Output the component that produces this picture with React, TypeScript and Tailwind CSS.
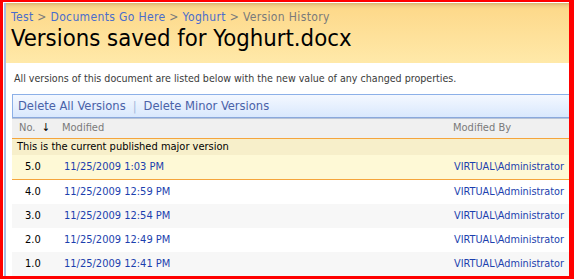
import React from "react";

const rows = [
  { v: "4.0", d: "11/25/2009 12:59 PM", bg: "bg-white" },
  { v: "3.0", d: "11/25/2009 12:54 PM", bg: "bg-[#f7f7f7]" },
  { v: "2.0", d: "11/25/2009 12:49 PM", bg: "bg-white" },
  { v: "1.0", d: "11/25/2009 12:41 PM", bg: "bg-[#f7f7f7]" },
];

const tahoma = "[font-family:'DejaVu_Sans_Condensed','DejaVu_Sans',sans-serif]";

export default function App() {
  return (
    <div className={`w-[574px] h-[279px] overflow-hidden bg-white border-[#ff0000] border-l-[3px] border-t-[2px] border-r-[5px] border-b-[3px] ${tahoma}`}>
      <div className="h-full pt-[1px] pl-[1px]">
        <div className="h-full border-l-2 border-[#a6bde3] flex flex-col">
          {/* header */}
          <div className="h-[60px] bg-[linear-gradient(to_bottom,#d9b570_0px,#f3cf85_3px,#fdd98b_6px,#ffe9a9_100%)] pl-[5px] pt-[7px]">
            <div className="text-[12px] leading-[14px] text-[#7a7a7a] tracking-[0.36px]">
              <span className="text-[#4a6dcc]">Test</span>
              <span> &gt; </span>
              <span className="text-[#4a6dcc]">Documents Go Here</span>
              <span> &gt; </span>
              <span className="text-[#4a6dcc]">Yoghurt</span>
              <span> &gt; </span>
              <span>Version History</span>
            </div>
            <div className="text-[23.7px] leading-[28px] text-black">Versions saved for Yoghurt.docx</div>
          </div>
          {/* description */}
          <div className="h-[31px] flex items-center pl-[8px] text-[10.6px] text-[#3a3a3a]">
            All versions of this document are listed below with the new value of any changed properties.
          </div>
          <div className="ml-[6px] flex flex-col">
            {/* toolbar */}
            <div className="h-[24px] border border-r-0 border-[#8cb0e8] border-b-[#8aa8dc] bg-[linear-gradient(to_bottom,#f4f8ff,#d9e8fd)] flex items-center pl-[5px] text-[12.8px] text-[#4a62a8] shadow-[0_1px_0_#b8c4d8]">
              <span>Delete All Versions</span>
              <span className="mx-[7px] text-[#a4b8dc]">|</span>
              <span>Delete Minor Versions</span>
            </div>
            {/* column headers */}
            <div className="h-[20px] mt-[1px] bg-[#f0f0f0] grid grid-cols-[50px_390px_1fr] items-center text-[11px] text-[#7a7a7a] border-b border-[#f5a53c]">
              <div className="pl-[7px] flex items-center">
                No.
                <span className="ml-[6px] text-black text-[11px]">↓</span>
              </div>
              <div>Modified</div>
              <div className="pl-[1px]">Modified By</div>
            </div>
            {/* label row */}
            <div className="h-[16px] bg-[#f7efca] flex items-center pl-[5px] text-[11px] text-black">
              This is the current published major version
            </div>
            {/* 5.0 */}
            <div className="h-[25px] bg-[#fef9d6] border-b border-[#f5a53c] grid grid-cols-[50px_390px_1fr] items-center text-[11px]">
              <div className="pl-[13px] text-black">5.0</div>
              <div className="pl-[2px] text-[#1c3fae]">11/25/2009 1:03 PM</div>
              <div className="pl-[2px] text-[#1c3fae] text-[10.8px]">VIRTUAL\Administrator</div>
            </div>
            {rows.map((r) => (
              <div key={r.v} className={`h-[24px] ${r.bg} grid grid-cols-[50px_390px_1fr] items-center text-[11px]`}>
                <div className="pl-[13px] text-black">{r.v}</div>
                <div className="pl-[2px] text-[#1c3fae]">{r.d}</div>
                <div className="pl-[2px] text-[#1c3fae] text-[10.8px]">VIRTUAL\Administrator</div>
              </div>
            ))}
          </div>
        </div>
      </div>
    </div>
  );
}
